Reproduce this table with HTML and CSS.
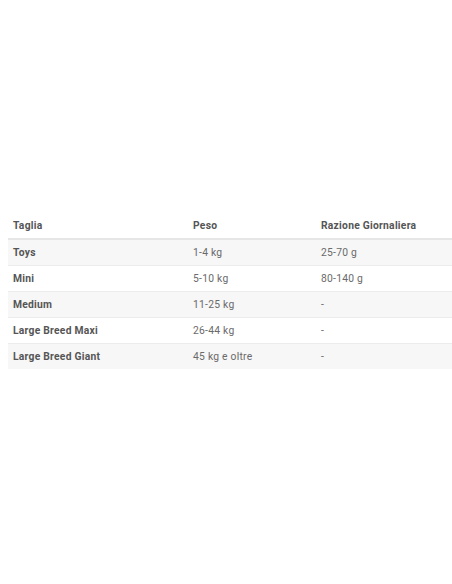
FILE: index.html
```html
<!DOCTYPE html>
<html>
<head>
<meta charset="utf-8">
<link rel="stylesheet" href="styles.css">
</head>
<body>
<table class="sizes">
  <thead>
    <tr><th>Taglia</th><th>Peso</th><th>Razione Giornaliera</th></tr>
  </thead>
  <tbody>
    <tr><td class="name">Toys</td><td>1-4 kg</td><td>25-70 g</td></tr>
    <tr><td class="name">Mini</td><td>5-10 kg</td><td>80-140 g</td></tr>
    <tr><td class="name">Medium</td><td>11-25 kg</td><td>-</td></tr>
    <tr><td class="name">Large Breed Maxi</td><td>26-44 kg</td><td>-</td></tr>
    <tr><td class="name">Large Breed Giant</td><td>45 kg e oltre</td><td>-</td></tr>
  </tbody>
</table>
</body>
</html>
```

FILE: styles.css
```css
html, body {
  margin: 0;
  padding: 0;
  background: #fff;
}
body {
  padding: 213px 0 0 8px;
  font-family: Roboto, "Liberation Sans", sans-serif;
  color: #6a6a6a;
  font-size: 10.3px;
  letter-spacing: 0.25px;
}
.sizes {
  border-collapse: collapse;
  width: 444px;
  table-layout: fixed;
}
.sizes th, .sizes td {
  text-align: left;
  padding: 0 5px;
  height: 25px;
}
.sizes th:nth-child(1) { width: 170px; }
.sizes th:nth-child(2) { width: 118px; }
.sizes th {
  font-weight: 700;
  color: #555;
  border-bottom: 2px solid #e6e6e6;
}
.sizes td {
  border-bottom: 1px solid #ececec;
}
.sizes td.name { font-weight: 700; color: #555; }
.sizes tbody tr:nth-child(odd) { background: #f7f7f7; }
.sizes tbody tr:last-child td { border-bottom: none; }
```
